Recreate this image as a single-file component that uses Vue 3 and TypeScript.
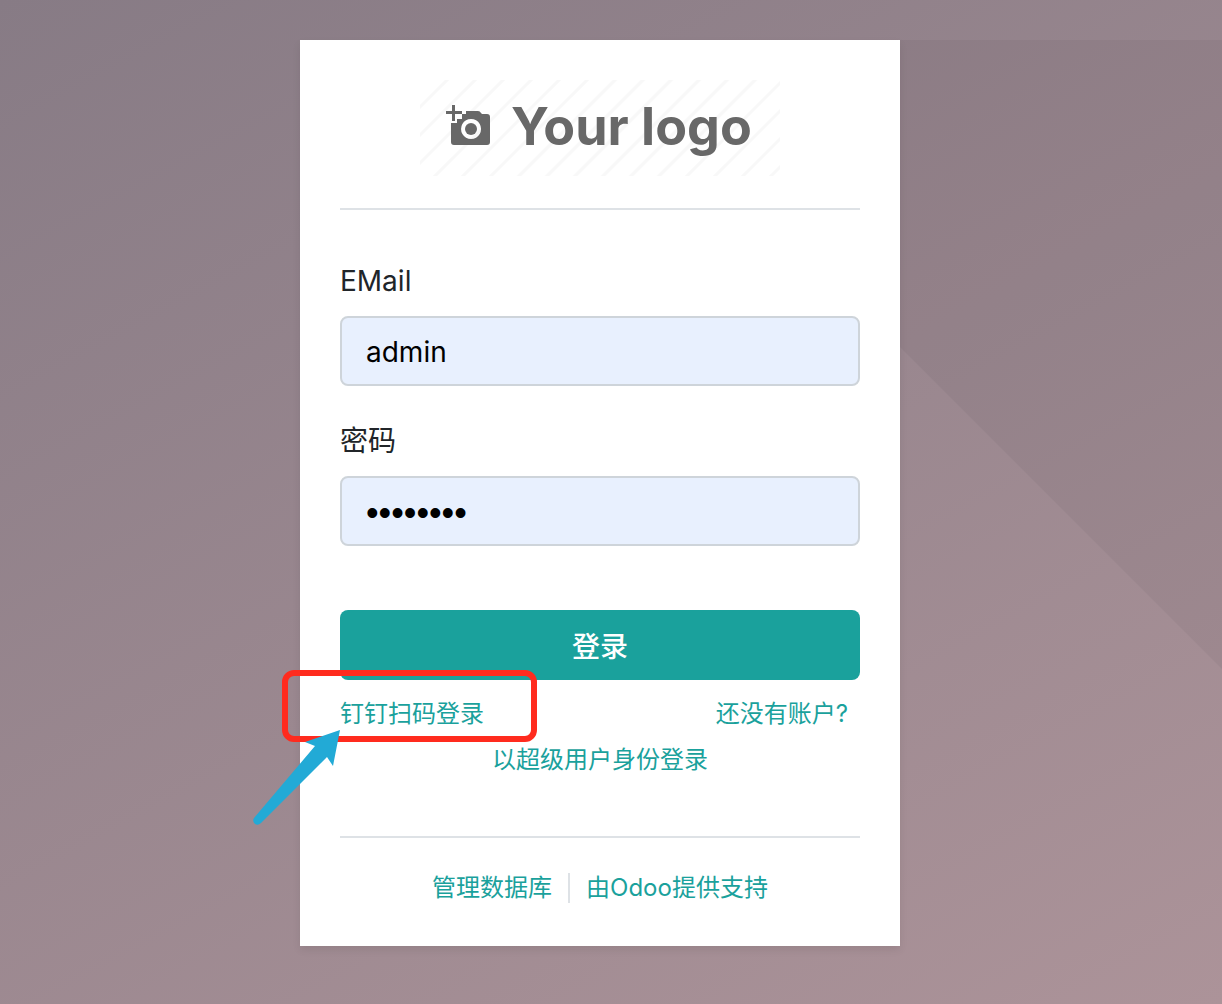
<script setup lang="ts">
import { ref } from 'vue'

const login = ref('admin')
const password = ref('password')
const stripes: number[] = Array.from({ length: 16 }, (_, i) => 27 + i * 28)
</script>

<template>
  <main class="page">
    <section class="card">
      <header class="brand">
        <svg class="logo" viewBox="0 0 360 96" role="img" aria-label="Your logo">
          <g stroke="#f8f8f8" stroke-width="3">
            <line v-for="s in stripes" :key="s" :x1="s + 4" y1="-4" :x2="s - 100" y2="100" />
          </g>
          <g class="logo-ink">
            <path
              fill-rule="evenodd"
              d="M37 43v-4h5v-5h4v-3h12q2 0 3 2l1 1h5q3 0 3 3v25q0 3-3 3H34q-3 0-3-3V43zM51 39a10 10 0 1 0 .1 0z"
            />
            <circle cx="51" cy="49" r="6" />
            <path d="M32 25h3v6h7v3h-7v7h-3v-7h-6v-3h6z" />
            <text x="91" y="65">Your logo</text>
          </g>
        </svg>
      </header>

      <form class="form" @submit.prevent>
        <label for="login">EMail</label>
        <input id="login" v-model="login" type="text" autocomplete="username" />
        <label for="password">密码</label>
        <input id="password" v-model="password" type="password" autocomplete="current-password" />
        <button type="submit">登录</button>
      </form>

      <nav class="links">
        <span class="marked">
          <a href="#dingtalk">钉钉扫码登录</a>
          <span class="frame"></span>
          <svg class="arrow" viewBox="0 0 90 98" aria-hidden="true">
            <path d="M88 0L81 36L75 27L9 93Q6 96 3 94Q0 91 2 88L63 16L53 12Z" fill="#22aad6" />
          </svg>
        </span>
        <a class="signup" href="#signup">还没有账户?</a>
      </nav>
      <a class="superuser" href="#superuser">以超级用户身份登录</a>

      <footer class="footer">
        <a href="#databases">管理数据库</a>
        <a href="#odoo">由Odoo提供支持</a>
      </footer>
    </section>
  </main>
</template>

<style>
body {
  background: #9a898f;
}
</style>

<style scoped>
* {
  box-sizing: border-box;
}

.page {
  min-height: 100vh;
  padding: 40px 22px 58px 0;
  background: linear-gradient(152deg, #877b85, #ac9399);
  font: 28px/42px Inter, "Noto Sans CJK SC", sans-serif;
  color: #212529;
  position: relative;
}

.page::before {
  content: "";
  position: absolute;
  top: 40px;
  right: 0;
  width: 629px;
  height: 629px;
  background: rgba(0, 0, 0, 0.04);
  clip-path: polygon(0 0, 100% 0, 100% 100%);
}

.card {
  position: relative;
  width: 100%;
  max-width: 600px;
  margin: 0 auto;
  padding: 40px;
  background: #fff;
  box-shadow: 0 4px 8px rgba(0, 0, 0, 0.08);
}

.brand {
  padding-bottom: 32px;
  border-bottom: 2px solid #dee2e6;
  text-align: center;
}

.logo {
  display: block;
  width: 360px;
  max-width: 100%;
  margin: 0 auto;
}

.logo-ink {
  fill: #686868;
}

.logo text {
  font: 700 52px Inter, sans-serif;
}

.form {
  display: flex;
  flex-direction: column;
  padding-top: 50px;
}

label {
  margin-bottom: 14px;
}

input {
  width: 100%;
  height: 70px;
  margin: 0 0 34px;
  padding: 14px 24px 12px;
  border: 2px solid #ced4da;
  border-radius: 8px;
  background: #e8f0fe;
  color: #000;
  font: inherit;
  outline: none;
}

input[type="password"] {
  padding: 16px 24px 12px;
  font-family: "Liberation Sans", sans-serif;
  font-size: 36px;
}

button {
  height: 70px;
  margin-top: 30px;
  padding: 4px 24px 0;
  border: 0;
  border-radius: 8px;
  background: #1aa19c;
  color: #fff;
  font: inherit;
  font-weight: 500;
}

a {
  color: #1aa19c;
  text-decoration: none;
}

.links,
.superuser,
.footer {
  font-size: 24px;
  line-height: 36px;
}

.links {
  display: flex;
  justify-content: space-between;
  padding: 16px 12px 10px 0;
}

.marked {
  position: relative;
}

.frame {
  position: absolute;
  top: -26px;
  left: -58px;
  width: 255px;
  height: 72px;
  border: 6px solid #ff2b1e;
  border-radius: 12px;
  pointer-events: none;
}

.arrow {
  position: absolute;
  top: 34px;
  left: -88px;
  width: 90px;
  height: 98px;
  pointer-events: none;
}

.superuser {
  display: block;
  text-align: center;
}

.footer {
  display: flex;
  justify-content: center;
  align-items: center;
  margin-top: 58px;
  padding-top: 32px;
  border-top: 2px solid #dee2e6;
}

.footer a + a {
  margin-left: 16px;
  padding-left: 16px;
  border-left: 2px solid #dee2e6;
  line-height: 30px;
}
</style>
